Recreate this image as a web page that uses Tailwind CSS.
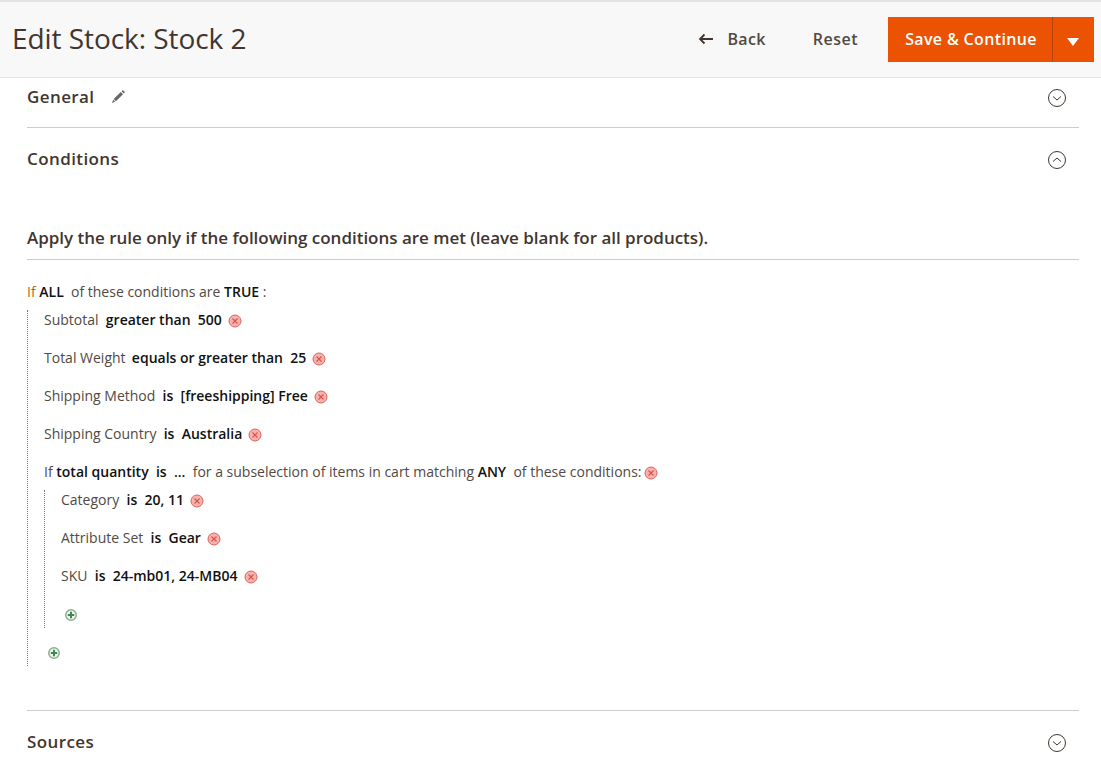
<!DOCTYPE html>
<html lang="en">
  <head>
    <meta charset="UTF-8" />
    <title>Edit Stock: Stock 2</title>
    <script src="https://cdn.jsdelivr.net/npm/@tailwindcss/browser@4"></script>
  </head>
  <body class="bg-white text-[#41362f] font-['Open_Sans',sans-serif] h-[767px] overflow-hidden">
    <!-- Page header -->
    <header class="h-[78px] bg-[#f8f8f8] border-t-2 border-b border-t-[#e3e3e3] border-b-[#e3e3e3] flex items-center justify-between pl-[12px] pr-[7px]">
      <h1 class="text-[28px] font-normal leading-[36px] pb-[3px] tracking-[-0.06px] text-[#41362f]">Edit Stock: Stock 2</h1>
      <div class="flex items-center">
        <button class="flex items-center pb-[2px] text-[16px] font-semibold tracking-[0.32px] text-[#514943] mr-[47px]">
          <svg width="16" height="12" viewBox="0 0 16 12" fill="none" stroke="#41362f" stroke-width="1.8" class="mr-[14px]">
            <path d="M15 6H2M6.500 1.500 2 6l4.500 4.500" />
          </svg>
          Back
        </button>
        <button class="pb-[2px] text-[16px] font-semibold tracking-[0.5px] text-[#514943] mr-[30px]">Reset</button>
        <div class="flex h-[45px] bg-[#eb5202] text-white">
          <button class="w-[165px] pb-[2px] pl-[2px] text-[16px] font-semibold tracking-[0.35px] border-r border-r-[#b84002]">Save &amp; Continue</button>
          <button class="w-[41px] pr-[1px] flex items-center justify-center">
            <span class="w-0 h-0 mt-[5px] border-x-[6px] border-x-transparent border-t-[8px] border-t-white"></span>
          </button>
        </div>
      </div>
    </header>

    <main class="pl-[27px] w-[1079px]">
      <!-- General -->
      <section class="h-[50px] border-b border-b-[#cccccc] flex items-start justify-between pt-[7px]">
        <div class="flex items-center">
          <h2 class="text-[17px] font-semibold tracking-[0.4px] leading-[24px]">General</h2>
          <svg width="15" height="15" viewBox="0 0 15 15" class="ml-[17px] mt-[-1px]" fill="#6b6560">
            <path d="M11.800 1 14 3.200 12.800 4.400 10.600 2.200ZM9.800 3 12 5.200 4.900 12.300 2.700 10.100ZM2.200 10.800 4.200 12.800 1 14Z" />
          </svg>
        </div>
        <svg width="20" height="20" viewBox="0 0 20 20" fill="none" stroke="#41362f" class="mr-[12px] mt-[3px]">
          <circle cx="10" cy="10" r="8.500" />
          <path d="M6 8.500 10 12l4-3.500" />
        </svg>
      </section>

      <!-- Conditions -->
      <section class="h-[583px] border-b border-b-[#cccccc]">
        <div class="flex items-start justify-between pt-[19px]">
          <h2 class="text-[17px] font-semibold tracking-[0.4px] leading-[24px]">Conditions</h2>
          <svg width="20" height="20" viewBox="0 0 20 20" fill="none" stroke="#41362f" class="mr-[12px] mt-[3px]">
            <circle cx="10" cy="10" r="8.500" />
            <path d="M6 11.500 10 8l4 3.500" />
          </svg>
        </div>
        <h3 class="mt-[55px] pb-[9px] border-b border-b-[#cccccc] text-[17px] font-semibold leading-[24px] tracking-[-0.02px]">Apply the rule only if the following conditions are met (leave blank for all products).</h3>

        <div class="mt-[22px] text-[14px] leading-[20px] text-[#514943]">
          <p class="h-[20px]"><span class="text-[#a96a1f]">If</span> <b class="font-semibold text-[#111111]">ALL</b>&nbsp; of these conditions are <b class="font-semibold text-[#111111]">TRUE</b> :</p>
          <div class="border-l border-dotted border-l-[#777777] pl-[16px] mt-[8px] flex flex-col gap-[18px] h-[356px]">
            <p class="flex items-center">Subtotal&nbsp;&nbsp;<b class="font-semibold text-[#111111]">greater than&nbsp;&nbsp;500</b>
              <svg width="14" height="14" viewBox="0 0 14 14" class="ml-[6px] mt-[2px]"><circle cx="7" cy="7" r="6" fill="#f6b3ae" stroke="#e0605a" /><path d="M4.500 4.500l5 5M9.500 4.500l-5 5" stroke="#d9534f" stroke-width="1.200" /></svg>
            </p>
            <p class="flex items-center">Total Weight&nbsp;&nbsp;<b class="font-semibold text-[#111111] ml-[-1px]">equals or greater than&nbsp;&nbsp;25</b>
              <svg width="14" height="14" viewBox="0 0 14 14" class="ml-[6px] mt-[2px]"><circle cx="7" cy="7" r="6" fill="#f6b3ae" stroke="#e0605a" /><path d="M4.500 4.500l5 5M9.500 4.500l-5 5" stroke="#d9534f" stroke-width="1.200" /></svg>
            </p>
            <p class="flex items-center">Shipping Method&nbsp;&nbsp;<b class="font-semibold text-[#111111]">is&nbsp;&nbsp;[freeshipping] Free</b>
              <svg width="14" height="14" viewBox="0 0 14 14" class="ml-[6px] mt-[2px]"><circle cx="7" cy="7" r="6" fill="#f6b3ae" stroke="#e0605a" /><path d="M4.500 4.500l5 5M9.500 4.500l-5 5" stroke="#d9534f" stroke-width="1.200" /></svg>
            </p>
            <p class="flex items-center">Shipping Country&nbsp;&nbsp;<b class="font-semibold text-[#111111]">is&nbsp;&nbsp;Australia</b>
              <svg width="14" height="14" viewBox="0 0 14 14" class="ml-[6px] mt-[2px]"><circle cx="7" cy="7" r="6" fill="#f6b3ae" stroke="#e0605a" /><path d="M4.500 4.500l5 5M9.500 4.500l-5 5" stroke="#d9534f" stroke-width="1.200" /></svg>
            </p>
            <div>
              <p class="flex items-center">If&nbsp;<b class="font-semibold text-[#111111]">total quantity&nbsp;&nbsp;is&nbsp;&nbsp;...</b>&nbsp;&nbsp;for a subselection of items in cart matching&nbsp;<b class="font-semibold text-[#111111]">ANY</b>&nbsp;&nbsp;of these conditions:
                <svg width="14" height="14" viewBox="0 0 14 14" class="ml-[2px] mt-[2px]"><circle cx="7" cy="7" r="6" fill="#f6b3ae" stroke="#e0605a" /><path d="M4.500 4.500l5 5M9.500 4.500l-5 5" stroke="#d9534f" stroke-width="1.200" /></svg>
              </p>
              <div class="border-l border-dotted border-l-[#777777] pl-[16px] mt-[8px] flex flex-col gap-[18px] h-[138px]">
                <p class="flex items-center">Category&nbsp;&nbsp;<b class="font-semibold text-[#111111]">is&nbsp;&nbsp;20, 11</b>
                  <svg width="14" height="14" viewBox="0 0 14 14" class="ml-[6px] mt-[2px]"><circle cx="7" cy="7" r="6" fill="#f6b3ae" stroke="#e0605a" /><path d="M4.500 4.500l5 5M9.500 4.500l-5 5" stroke="#d9534f" stroke-width="1.200" /></svg>
                </p>
                <p class="flex items-center">Attribute Set&nbsp;&nbsp;<b class="font-semibold text-[#111111]">is&nbsp;&nbsp;Gear</b>
                  <svg width="14" height="14" viewBox="0 0 14 14" class="ml-[6px] mt-[2px]"><circle cx="7" cy="7" r="6" fill="#f6b3ae" stroke="#e0605a" /><path d="M4.500 4.500l5 5M9.500 4.500l-5 5" stroke="#d9534f" stroke-width="1.200" /></svg>
                </p>
                <p class="flex items-center">SKU&nbsp;&nbsp;<b class="font-semibold text-[#111111]">is&nbsp;&nbsp;24-mb01, 24-MB04</b>
                  <svg width="14" height="14" viewBox="0 0 14 14" class="ml-[7px] mt-[2px]"><circle cx="7" cy="7" r="6" fill="#f6b3ae" stroke="#e0605a" /><path d="M4.500 4.500l5 5M9.500 4.500l-5 5" stroke="#d9534f" stroke-width="1.200" /></svg>
                </p>
                <svg width="14" height="14" viewBox="0 0 14 14" class="ml-[3px] mt-[4px]"><circle cx="7" cy="7" r="5.250" fill="#eef5ee" stroke="#8fae8f" stroke-width="1.500" /><path d="M7 3.800v6.400M3.800 7h6.400" stroke="#3c8a4c" stroke-width="2" /></svg>
              </div>
            </div>
            <svg width="14" height="14" viewBox="0 0 14 14" class="ml-[3px]"><circle cx="7" cy="7" r="5.250" fill="#eef5ee" stroke="#8fae8f" stroke-width="1.500" /><path d="M7 3.800v6.400M3.800 7h6.400" stroke="#3c8a4c" stroke-width="2" /></svg>
          </div>
        </div>
      </section>

      <!-- Sources -->
      <section class="flex items-start justify-between pt-[19px]">
        <h2 class="text-[17px] font-semibold tracking-[0.4px] leading-[24px]">Sources</h2>
        <svg width="20" height="20" viewBox="0 0 20 20" fill="none" stroke="#41362f" class="mr-[12px] mt-[3px]">
          <circle cx="10" cy="10" r="8.500" />
          <path d="M6 8.500 10 12l4-3.500" />
        </svg>
      </section>
    </main>
  </body>
</html>
